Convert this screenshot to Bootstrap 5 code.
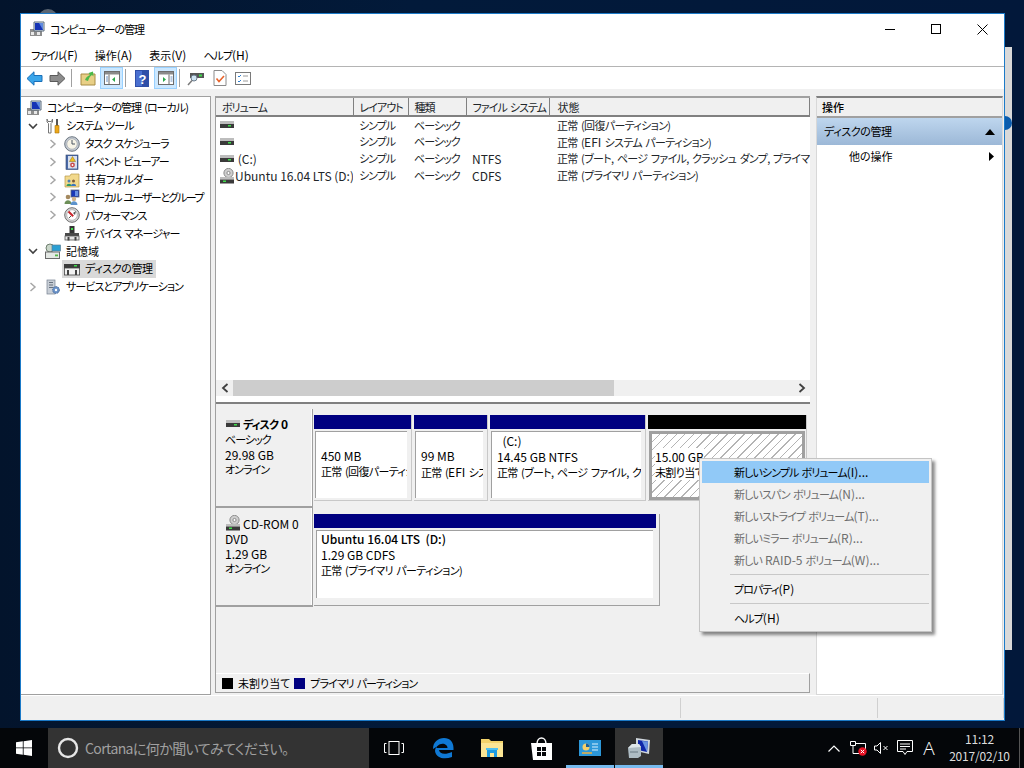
<!DOCTYPE html>
<html lang="ja">
<head>
    <meta charset="UTF-8">
    <title>コンピューターの管理</title>
    <link href="https://cdn.jsdelivr.net/npm/bootstrap@5.3.0/dist/css/bootstrap.min.css" rel="stylesheet">
    <style>
        html, body { height: 768px; overflow: hidden; }
        body {
            background: linear-gradient(90deg, #03142c 0%, #021a3a 40%, #02183a 100%);
            font-family: "Noto Sans CJK JP", "Open Sans", sans-serif;
            font-feature-settings: "palt";
            font-size: 11px;
            letter-spacing: -.95px;
            word-spacing: 1.5px;
            line-height: 15px;
            color: #000;
        }
        /* latin runs stay at full size, the kana are squeezed to the narrow look of the original */
        .ln { font-size: 12px; letter-spacing: 0; word-spacing: 0; }
        .kj { letter-spacing: 0; }
        .mix { letter-spacing: -.65px; }
        .soft { letter-spacing: -.4px; }
        .tight { letter-spacing: -1.5px; }
        svg { display: block; flex: none; }
        .desktop { height: 728px; }
        .back-strip { left: 1005px; top: 47px; width: 7px; height: 603px; background: #d9d9d9; }
        .back-dot { left: 998px; top: 116px; width: 14px; height: 14px; border-radius: 50%; background: #0b5cad; }
        .back-arc { left: 38px; top: 9px; width: 20px; height: 10px; border-radius: 10px 10px 0 0; background: #5a6572; }
        .window {
            left: 20px; top: 13px; width: 985px; height: 708px;
            background: #f0f0f0; border: 1px solid #1b7ac8;
        }
        .titlebar { height: 30px; background: #fff; padding-left: 8px; }
        .titlebar .title { margin-left: 5px; }
        .winbtn { width: 46px; height: 30px; }
        .winbtns { margin-right: -1px; }
        .menubar { height: 23px; background: #fff; border-bottom: 1px solid #b4b4b4; padding-left: 10px; }
        .menubar span.item { margin-right: 17px; }
        .toolbar { height: 22px; background: #fff; padding-left: 2px; }
        .tool { width: 23px; height: 22px; }
        .tool.w25 { width: 25px; }
        .tool.on { background: #cce8ff; outline: 1px solid #99d1ff; outline-offset: -1px; }
        .tool-sep { width: 1px; height: 18px; background: #a0a0a0; margin: 0 3px 0 2px; }
        .toolband { height: 7px; background: #f0f0f0; }
        .panes { height: 599px; }
        .pane-left { width: 190px; background: #fff; border-top: 1px solid #a0a0a0; border-right: 1px solid #a0a0a0; border-bottom: 1px solid #a0a0a0; padding-top: 2px; }
        .tree-row { height: 17.9px; white-space: nowrap; }
        .lvl-0 { padding-left: 5px; }
        .lvl-1 { padding-left: 4px; }
        .lvl-2 { padding-left: 24px; }
        .chev { width: 16px; margin-right: 4px; }
        .lvl-2 .chev { margin-right: 3px; }
        .tree-text { margin-left: 5px; }
        .sel-wrap { background: #d9d9d9; width: 94px; padding-left: 2px; margin-left: -2px; height: 18px; }
        .pane-mid { width: 595px; margin: 0 0 2px 4px; border-left: 1px solid #a0a0a0; border-top: 2px solid #a0a0a0; border-bottom: 1px solid #a0a0a0; background: #f0f0f0; }
        .vol-top { height: 306px; background: #fff; border-bottom: 2px solid #808080; }
        .vol-table { table-layout: fixed; width: 100%; margin: 0; --bs-table-bg: transparent; }
        .vol-table th, .vol-table td { padding: 0 0 0 6px; font-weight: 400; white-space: nowrap; overflow: hidden; height: 17px; border: 0; line-height: 15px; vertical-align: middle; }
        .vol-table th { height: 18px; padding-top: 1px; background: #f0f0f0; border-right: 1px solid #808080; border-bottom: 2px solid #808080; }
        .vol-table td:first-child { padding-left: 3px; }
        .vol-table th:last-child, .vol-table td:last-child { padding-left: 8px; }
        .vol-spacer { height: 196px; }
        .hscroll { height: 16px; background: #f0f0f0; }
        .hscroll .arrow { width: 17px; }
        .thumb { width: 381px; height: 16px; background: #cdcdcd; }
        .disk-area { height: 269px; padding-top: 5px; background: #f0f0f0; }
        .disk-row { height: 99px; }
        .disk-label { width: 97px; padding: 7px 0 0 9px; background: #f0f0f0; border-right: 1px solid #a0a0a0; border-bottom: 2px solid #a0a0a0; box-shadow: inset -1px 0 #fff; }
        .disk-label .name { font-weight: 700; gap: 2px; }
        .disk-parts { padding-left: 1px; padding-top: 6px; gap: 2px; }
        .part { height: 86px; border-right: 1px solid #c8c8c8; border-bottom: 1px solid #c8c8c8; }
        .part-bar { height: 14px; background: #000080; }
        .part-bar.black { background: #000; }
        .part-box { margin: 2px 2px 0 1px; height: 69px; background: #fff; border: 2px solid #f0f0f0; border-width: 0 2px 2px 0; box-shadow: inset 1px 1px #a0a0a0; padding: 2px 0 0 6px; white-space: nowrap; overflow: hidden; letter-spacing: -.65px; }
        .part-box.free {
            margin: 2px 1px 0 1px; border: 3px solid #a0a0a0; box-shadow: none; padding: 0 0 0 3px;
            background: repeating-linear-gradient(135deg, #fff 0, #fff 5px, #b4b4b4 5px, #b4b4b4 6px);
        }
        .part-box.free span { background: #fff; }
        .p1 { width: 98px; } .p2 { width: 74px; } .p3 { width: 156px; } .p4 { width: 159px; }
        .cd-part { width: 346px; height: 92px; border-right: 1px solid #a0a0a0; border-bottom: 1px solid #a0a0a0; }
        .cd-part .part-bar { margin-right: 3px; }
        .cd-part .part-box { height: 70px; margin: 2px 4px 0 2px; padding: 1px 0 0 5px; }
        .legend { height: 19px; border-top: 1px solid #fff; border-right: 1px solid #a0a0a0; padding: 1px 0 0 6px; }
        .swatch { width: 11px; height: 11px; margin-right: 5px; }
        .pane-right { width: 187px; margin-left: 6px; background: #fff; border: 1px solid #d8d8d8; border-top: 2px solid #808080; }
        .act-head { height: 20px; background: #f0f0f0; border-bottom: 2px solid #a0a0a0; padding: 1px 0 0 5px; font-weight: 500; }
        .act-sel { height: 27px; background: linear-gradient(#bed6ee, #9cb8d7); padding: 0 7px; }
        .act-item { height: 23px; padding: 0 8px 0 32px; }
        .statusbar { height: 25px; border-top: 1px solid #fff; }
        .status-cell { border-right: 1px solid #d0d0d0; margin: 2px 0; }
        .s1 { width: 660px; } .s2 { width: 197px; } .s3 { width: 126px; }
        .ctx {
            display: block; left: 699px; top: 458px; width: 233px; padding: 2px; margin: 0;
            background: #f0f0f0; border: 1px solid #c4c4c4; border-radius: 0;
            box-shadow: 3px 3px 3px rgba(0, 0, 0, .45); font-size: 11px; color: #000; letter-spacing: -.9px;
        }
        .ctx .dropdown-item { height: 22px; line-height: 22px; padding: 0 0 0 32px; color: #000; }
        .ctx .dropdown-item.active { background: #91c9f7; color: #000; }
        .ctx .dropdown-item.disabled { color: #6d6d6d; background: transparent; }
        .ctx .dropdown-divider { margin: 3px 0 3px 28px; border-top: 1px solid #c8c8c8; opacity: 1; }
        .taskbar { height: 40px; background: #040609; color: #fff; }
        .start { width: 48px; }
        .search { width: 321px; height: 40px; background: #333; padding-left: 9px; color: #a0a0a0; font-size: 14px; letter-spacing: -.6px; gap: 6px; }
        .slot { width: 48px; height: 40px; margin-left: 1px; position: relative; }
        .slot.run { box-shadow: inset 0 -3px #76b9ed, inset 8px 0 #040609, inset -8px 0 #040609; }
        .slot.cur { background: #333; box-shadow: inset 0 -3px #76b9ed; }
        .tray-slot { height: 40px; }
        .t24 { width: 24px; } .t22 { width: 22px; } .t26 { width: 26px; }
        .clock { width: 79px; font-size: 12px; letter-spacing: -.2px; line-height: 17px; color: #ddd; text-align: center; padding-bottom: 2px; }
        .show-desk { width: 5px; height: 40px; border-left: 1px solid #555; }
        .tray-a { font-family: "Open Sans", sans-serif; font-size: 19px; font-weight: 300; letter-spacing: 0; color: #fff; }
    </style>
</head>
<body class="m-0">
<svg width="0" height="0" class="position-absolute">
    <defs>
        <symbol id="drive" viewBox="0 0 16 16"><rect x="1" y="4" width="14" height="3" fill="#bdbdbd"/><rect x="1" y="7" width="14" height="4" fill="#3a3a3a"/><rect x="9" y="8" width="3" height="1.5" fill="#3fdc4a"/></symbol>
        <symbol id="cddrive" viewBox="0 0 16 16"><circle cx="9.5" cy="5" r="4.6" fill="#cfcfcf" stroke="#8c8c8c"/><circle cx="9.5" cy="5" r="1.6" fill="#fff" stroke="#8c8c8c"/><rect x="1" y="9" width="14" height="2.5" fill="#bdbdbd"/><rect x="1" y="11.5" width="14" height="4" fill="#3a3a3a"/><rect x="4" y="12.5" width="3" height="1.5" fill="#3fdc4a"/></symbol>
        <symbol id="mmc" viewBox="0 0 16 16"><rect x="1" y="8" width="12" height="7" fill="#8d8d8d"/><rect x="2" y="11" width="3" height="3" fill="#e8e8e8"/><rect x="8" y="11" width="3" height="3" fill="#e8e8e8"/><path d="M5 1h10v9H5z" fill="#dce6f2" stroke="#5a6a7a"/><path d="M6 2h8v7H6z" fill="#1533b5"/><path d="M10 2h4v7z" fill="#5f8ae0"/></symbol>
        <symbol id="tools" viewBox="0 0 16 16"><path d="M2 1v3l1.500 1.500V15h2.500V5.500L7.500 4V1L6.500 3.500H3z" fill="#fff" stroke="#777"/><path d="M11 1h2v7h-2z" fill="#555"/><path d="M10 7.500h4V15h-4z" fill="#eda81a" stroke="#a8720c" stroke-width=".6"/></symbol>
        <symbol id="clock" viewBox="0 0 16 16"><circle cx="8" cy="8" r="7.300" fill="#c4cad2" stroke="#6d7782"/><circle cx="8" cy="8" r="5.200" fill="#f7f4e7" stroke="#98a0a8" stroke-width=".6"/><path d="M8 4v4h3" fill="none" stroke="#4b5560" stroke-width="1"/></symbol>
        <symbol id="event" viewBox="0 0 16 16"><rect x="2" y="1" width="12" height="14.500" fill="#4a6aa8" stroke="#33476e" stroke-width=".6"/><rect x="4" y="2" width="9" height="12.500" fill="#d8e0ee"/><path d="M8.500 2.500l3 5h-6z" fill="#f0c020" stroke="#8a6a10" stroke-width=".5"/><circle cx="8.500" cy="11" r="2.400" fill="#c84a4a"/><circle cx="8.500" cy="11" r=".9" fill="#fff"/></symbol>
        <symbol id="share" viewBox="0 0 16 16"><path d="M1 4h5l1-2h8v13H1z" fill="#f2d98c" stroke="#b89a48" stroke-width=".7"/><circle cx="5" cy="9" r="1.500" fill="#4c7fb5"/><path d="M2.500 14c0-3 5-3 5 0z" fill="#2e9a60"/><circle cx="9.500" cy="9" r="1.500" fill="#7a5a3a"/><path d="M7 14c0-3 5-3 5 0z" fill="#3a76c0"/></symbol>
        <symbol id="users" viewBox="0 0 16 16"><rect x="7" y="1" width="8" height="7" fill="#1a38b8" stroke="#606a78" stroke-width=".8"/><rect x="11" y="2" width="3" height="5" fill="#6a92e4"/><circle cx="4" cy="8" r="2.300" fill="#a58a60"/><path d="M.5 15c0-5 7-5 7 0z" fill="#6d8f58"/><circle cx="10" cy="10" r="2.200" fill="#d2b48c"/><path d="M6.500 16c0-5 7-5 7 0z" fill="#5d93cc"/></symbol>
        <symbol id="perf" viewBox="0 0 16 16"><circle cx="8" cy="8" r="7.300" fill="#d9d9d9" stroke="#707070"/><circle cx="8" cy="8" r="5.300" fill="#fff" stroke="#999" stroke-width=".6"/><path d="M4.500 4.500L9.200 9.200" stroke="#c8242a" stroke-width="2"/><path d="M9 6l3-2-1 4z" fill="#555"/><path d="M5 11l2-2" stroke="#555"/></symbol>
        <symbol id="device" viewBox="0 0 16 16"><rect x="5.500" y="1" width="5" height="7" fill="#333"/><rect x="7" y="3" width="2" height="2" fill="#3fdc4a"/><rect x="1" y="8" width="14" height="3" fill="#4a4a4a"/><rect x="1" y="11" width="14" height="4" fill="#e6e6e6" stroke="#555" stroke-width=".8"/><rect x="3.500" y="12" width="2" height="3.500" fill="#444"/><rect x="10.500" y="12" width="2" height="3.500" fill="#444"/></symbol>
        <symbol id="storage" viewBox="0 0 16 16"><circle cx="5" cy="5" r="4" fill="#c9d6c9" stroke="#708070"/><rect x="7" y="2" width="8.500" height="6" fill="#2b9fd3" stroke="#5a7f95" stroke-width=".7"/><rect x=".5" y="9" width="14" height="6.500" fill="#e4e8e4" stroke="#6a6a6a"/><rect x="10" y="11.500" width="3" height="1.800" fill="#54b848"/></symbol>
        <symbol id="diskm" viewBox="0 0 16 16"><rect x="0" y="3" width="16" height="4" fill="#3c3c3c"/><rect x="10" y="4" width="3" height="1.500" fill="#3fdc4a"/><rect x=".4" y="7" width="15.200" height="7" fill="#f2f2f2" stroke="#444" stroke-width=".8"/><rect x="3" y="9" width="2" height="5" fill="#444"/><rect x="11" y="9" width="2" height="5" fill="#444"/></symbol>
        <symbol id="services" viewBox="0 0 16 16"><rect x="2" y="1" width="8" height="14" fill="#c8ced6" stroke="#768090" stroke-width=".7"/><path d="M4 3.500h4M4 6h4M4 8.500h4" stroke="#68727e"/><circle cx="11" cy="11" r="3.400" fill="#6a92c8" stroke="#4a6a98" stroke-dasharray="1.500 1"/><circle cx="11" cy="11" r="1.200" fill="#fff"/></symbol>
        <symbol id="chev-r" viewBox="0 0 10 10"><path d="M2.500 1l4.500 4-4.500 4" fill="none" stroke="#a6a6a6" stroke-width="1.500"/></symbol>
        <symbol id="chev-d" viewBox="0 0 10 10"><path d="M1 3l4 4 4-4" fill="none" stroke="#404040" stroke-width="1.600"/></symbol>
    </defs>
</svg>

<div class="desktop position-relative">
    <div class="back-arc position-absolute"></div>
    <div class="back-strip position-absolute"></div>
    <div class="back-dot position-absolute"></div>

    <div class="window position-absolute d-flex flex-column">
        <div class="titlebar d-flex align-items-center">
            <svg width="16" height="16"><use href="#mmc"/></svg>
            <span class="title">コンピューターの管理</span>
            <div class="winbtns ms-auto d-flex">
                <div class="winbtn d-flex align-items-center justify-content-center"><svg width="10" height="10" viewBox="0 0 10 10"><path d="M0 5.500h10" stroke="#000"/></svg></div>
                <div class="winbtn d-flex align-items-center justify-content-center"><svg width="10" height="10" viewBox="0 0 10 10"><rect x=".5" y=".5" width="9" height="9" fill="none" stroke="#000"/></svg></div>
                <div class="winbtn d-flex align-items-center justify-content-center"><svg width="11" height="11" viewBox="0 0 11 11"><path d="M.5.500l10 10M10.500.500l-10 10" stroke="#000"/></svg></div>
            </div>
        </div>
        <div class="menubar d-flex align-items-center">
            <span class="item tight">ファイル<span class="ln">(F)</span></span><span class="item kj">操作<span class="ln">(A)</span></span><span class="item kj">表示<span class="ln">(V)</span></span><span class="item">ヘルプ<span class="ln">(H)</span></span>
        </div>
        <div class="toolbar d-flex align-items-center">
            <div class="tool d-flex align-items-center justify-content-center"><svg width="17" height="15" viewBox="0 0 17 15"><path d="M1 7.500L8 .8V4.500h8v6H8v3.700z" fill="#3aa5ea" stroke="#1a6fb8"/></svg></div>
            <div class="tool d-flex align-items-center justify-content-center"><svg width="17" height="15" viewBox="0 0 17 15"><path d="M16 7.500L9 .8V4.500H1v6h8v3.700z" fill="#8c8c8c" stroke="#5a5a5a"/></svg></div>
            <div class="tool-sep"></div>
            <div class="tool w25 d-flex align-items-center justify-content-center"><svg width="16" height="16" viewBox="0 0 16 16"><path d="M1 4h14v11H1z" fill="#e8cf86" stroke="#a88c44"/><path d="M5 10c1-3 3-4 5-5L8.500 3 13 1.500l.5 5L12 5c-2 1-3 3-4 6z" fill="#4cb848"/></svg></div>
            <div class="tool on d-flex align-items-center justify-content-center"><svg width="16" height="14" viewBox="0 0 16 14"><rect x=".5" y=".5" width="15" height="13" fill="#fff" stroke="#6d6d6d"/><path d="M1 1h14v2.500H1z" fill="#8a8a8a"/><path d="M5 3.500v10" stroke="#6d6d6d"/><path d="M2 6h2M2 8h2M2 10h2" stroke="#6a90c0"/><path d="M11 6v5L8 8.500z" fill="#2aa84a"/></svg></div>
            <div class="tool-sep"></div>
            <div class="tool w25 d-flex align-items-center justify-content-center"><svg width="14" height="17" viewBox="0 0 14 17"><rect width="14" height="17" fill="#2f4fa8"/><path d="M1 1h6v15H1z" fill="#4a6fd0"/><text x="7" y="13.500" text-anchor="middle" fill="#fff" font-size="13" font-weight="700" font-family="Liberation Sans">?</text></svg></div>
            <div class="tool on d-flex align-items-center justify-content-center"><svg width="16" height="14" viewBox="0 0 16 14"><rect x=".5" y=".5" width="15" height="13" fill="#fff" stroke="#6d6d6d"/><path d="M1 1h14v2.500H1z" fill="#8a8a8a"/><path d="M11 3.500v10" stroke="#6d6d6d"/><path d="M12.500 6h2M12.500 8h2M12.500 10h2" stroke="#6a90c0"/><path d="M5 6v5l3-2.500z" fill="#2aa84a"/></svg></div>
            <div class="tool-sep"></div>
            <div class="tool w25 d-flex align-items-center justify-content-center"><svg width="18" height="16" viewBox="0 0 18 16"><rect x="3" y="3" width="14" height="5" fill="#555"/><rect x="12" y="4.500" width="3" height="2" fill="#3fdc4a"/><circle cx="7" cy="8" r="3" fill="#cfe3f2" stroke="#6a7a8a"/><path d="M5 10.500L1 15" stroke="#7a7a7a" stroke-width="1.500"/></svg></div>
            <div class="tool d-flex align-items-center justify-content-center"><svg width="14" height="16" viewBox="0 0 14 16"><path d="M1 .5h8l4 4v11H1z" fill="#fff" stroke="#8a8a8a"/><path d="M3.500 8.500l2.500 3 5-5.500" fill="none" stroke="#e8632a" stroke-width="1.600"/></svg></div>
            <div class="tool d-flex align-items-center justify-content-center"><svg width="16" height="13" viewBox="0 0 16 13"><rect x=".5" y=".5" width="15" height="12" fill="#fff" stroke="#7a7a7a"/><path d="M3 4l1 1 2-2M3 9l1 1 2-2" fill="none" stroke="#2f7fd0"/><path d="M8 4h5M8 9h5" stroke="#9a9a9a"/></svg></div>
        </div>
        <div class="toolband"></div>

        <div class="panes d-flex">
            <div class="pane-left">
                <div class="tree-row lvl-0 d-flex align-items-center"><svg width="16" height="16"><use href="#mmc"/></svg><span class="tree-text">コンピューターの管理 (ローカル)</span></div>
                <div class="tree-row lvl-1 d-flex align-items-center"><svg class="chev" width="10" height="10"><use href="#chev-d"/></svg><svg width="16" height="16"><use href="#tools"/></svg><span class="tree-text">システム ツール</span></div>
                <div class="tree-row lvl-2 d-flex align-items-center"><svg class="chev" width="10" height="10"><use href="#chev-r"/></svg><svg width="16" height="16"><use href="#clock"/></svg><span class="tree-text">タスク スケジューラ</span></div>
                <div class="tree-row lvl-2 d-flex align-items-center"><svg class="chev" width="10" height="10"><use href="#chev-r"/></svg><svg width="16" height="16"><use href="#event"/></svg><span class="tree-text">イベント ビューアー</span></div>
                <div class="tree-row lvl-2 d-flex align-items-center"><svg class="chev" width="10" height="10"><use href="#chev-r"/></svg><svg width="16" height="16"><use href="#share"/></svg><span class="tree-text soft">共有フォルダー</span></div>
                <div class="tree-row lvl-2 d-flex align-items-center"><svg class="chev" width="10" height="10"><use href="#chev-r"/></svg><svg width="16" height="16"><use href="#users"/></svg><span class="tree-text tight">ローカル ユーザーとグループ</span></div>
                <div class="tree-row lvl-2 d-flex align-items-center"><svg class="chev" width="10" height="10"><use href="#chev-r"/></svg><svg width="16" height="16"><use href="#perf"/></svg><span class="tree-text">パフォーマンス</span></div>
                <div class="tree-row lvl-2 d-flex align-items-center"><div class="chev"></div><svg width="16" height="16"><use href="#device"/></svg><span class="tree-text">デバイス マネージャー</span></div>
                <div class="tree-row lvl-1 d-flex align-items-center"><svg class="chev" width="10" height="10"><use href="#chev-d"/></svg><svg width="16" height="16"><use href="#storage"/></svg><span class="tree-text kj">記憶域</span></div>
                <div class="tree-row lvl-2 d-flex align-items-center"><div class="chev"></div><div class="sel-wrap d-flex align-items-center"><svg width="16" height="16"><use href="#diskm"/></svg><span class="tree-text soft">ディスクの管理</span></div></div>
                <div class="tree-row lvl-1 d-flex align-items-center"><svg class="chev" width="10" height="10"><use href="#chev-r"/></svg><svg width="16" height="16"><use href="#services"/></svg><span class="tree-text">サービスとアプリケーション</span></div>
            </div>

            <div class="pane-mid">
                <div class="vol-top">
                    <table class="table vol-table">
                        <colgroup><col width="137"><col width="55"><col width="58"><col width="83"><col></colgroup>
                        <thead><tr><th>ボリューム</th><th>レイアウト</th><th>種類</th><th>ファイル システム</th><th class="kj">状態</th></tr></thead>
                        <tbody>
                            <tr><td><svg width="16" height="16"><use href="#drive"/></svg></td><td>シンプル</td><td>ベーシック</td><td></td><td class="mix">正常 (回復パーティション)</td></tr>
                            <tr><td><svg width="16" height="16"><use href="#drive"/></svg></td><td>シンプル</td><td>ベーシック</td><td></td><td class="mix">正常 (<span class="ln">EFI</span> システム パーティション)</td></tr>
                            <tr><td><div class="d-flex align-items-center"><svg width="16" height="16"><use href="#drive"/></svg><span class="ln">&nbsp;(C:)</span></div></td><td>シンプル</td><td>ベーシック</td><td class="ln">NTFS</td><td class="mix">正常 (ブート, ページ ファイル, クラッシュ ダンプ, プライマリ パーティション)</td></tr>
                            <tr><td><div class="d-flex align-items-center"><svg width="16" height="16"><use href="#cddrive"/></svg><span class="ln">Ubuntu 16.04 LTS (D:)</span></div></td><td>シンプル</td><td>ベーシック</td><td class="ln">CDFS</td><td class="mix">正常 (プライマリ パーティション)</td></tr>
                        </tbody>
                    </table>
                    <div class="vol-spacer"></div>
                    <div class="hscroll d-flex align-items-center">
                        <div class="arrow d-flex justify-content-center"><svg width="8" height="10" viewBox="0 0 8 10"><path d="M6.500 1L2 5l4.500 4" fill="none" stroke="#404040" stroke-width="1.800"/></svg></div>
                        <div class="thumb"></div>
                        <div class="arrow ms-auto d-flex justify-content-center"><svg width="8" height="10" viewBox="0 0 8 10"><path d="M1.500 1L6 5 1.500 9" fill="none" stroke="#404040" stroke-width="1.800"/></svg></div>
                    </div>
                </div>
                <div class="disk-area">
                    <div class="disk-row d-flex">
                        <div class="disk-label">
                            <div class="name d-flex align-items-center"><svg width="16" height="16"><use href="#drive"/></svg><span>ディスク <span class="ln">0</span></span></div>
                            <div>ベーシック</div><div class="ln">29.98 GB</div><div>オンライン</div>
                        </div>
                        <div class="disk-parts d-flex">
                            <div class="part p1"><div class="part-bar"></div><div class="part-box"><br><span class="ln">450 MB</span><br>正常 (回復パーティション)</div></div>
                            <div class="part p2"><div class="part-bar"></div><div class="part-box"><br><span class="ln">99 MB</span><br>正常 (<span class="ln">EFI</span> システム パーティション)</div></div>
                            <div class="part p3"><div class="part-bar"></div><div class="part-box"><span class="ln">&nbsp;&nbsp;(C:)</span><br><span class="ln">14.45 GB NTFS</span><br>正常 (ブート, ページ ファイル, クラッシュ ダンプ, プライマリ パーティション)</div></div>
                            <div class="part p4"><div class="part-bar black"></div><div class="part-box free"><br><span class="ln">15.00 GB</span><br><span>未割り当て</span></div></div>
                        </div>
                    </div>
                    <div class="disk-row d-flex">
                        <div class="disk-label">
                            <div class="name d-flex align-items-center"><svg width="16" height="16"><use href="#cddrive"/></svg><span class="fw-normal ln">CD-ROM 0</span></div>
                            <div class="ln">DVD</div><div class="ln">1.29 GB</div><div>オンライン</div>
                        </div>
                        <div class="disk-parts d-flex">
                            <div class="cd-part"><div class="part-bar"></div><div class="part-box"><span class="fw-medium ln">Ubuntu 16.04 LTS&nbsp; (D:)</span><br><span class="ln">1.29 GB CDFS</span><br>正常 (プライマリ パーティション)</div></div>
                        </div>
                    </div>
                </div>
                <div class="legend d-flex align-items-center">
                    <span class="swatch bg-black"></span><span class="kj me-1">未割り当て</span>
                    <span class="swatch part-bar"></span><span>プライマリ パーティション</span>
                </div>
            </div>

            <div class="pane-right">
                <div class="act-head d-flex align-items-center kj">操作</div>
                <div class="act-sel d-flex align-items-center justify-content-between"><span class="soft">ディスクの管理</span><svg width="10" height="6" viewBox="0 0 10 6"><path d="M0 6l5-6 5 6z" fill="#000"/></svg></div>
                <div class="act-item d-flex align-items-center justify-content-between"><span class="kj">他の操作</span><svg width="5" height="9" viewBox="0 0 5 9"><path d="M0 0l5 4.500L0 9z" fill="#000"/></svg></div>
            </div>
        </div>

        <div class="statusbar d-flex">
            <div class="status-cell s1"></div><div class="status-cell s2"></div><div class="status-cell s3"></div>
        </div>
    </div>

    <ul class="dropdown-menu ctx position-absolute list-unstyled">
        <li><a class="dropdown-item active" href="#">新しいシンプル ボリューム<span class="ln">(I)...</span></a></li>
        <li><a class="dropdown-item disabled" href="#">新しいスパン ボリューム<span class="ln">(N)...</span></a></li>
        <li><a class="dropdown-item disabled" href="#">新しいストライプ ボリューム<span class="ln">(T)...</span></a></li>
        <li><a class="dropdown-item disabled" href="#">新しいミラー ボリューム<span class="ln">(R)...</span></a></li>
        <li><a class="dropdown-item disabled" href="#">新しい <span class="ln">RAID-5</span> ボリューム<span class="ln">(W)...</span></a></li>
        <li><hr class="dropdown-divider"></li>
        <li><a class="dropdown-item" href="#">プロパティ<span class="ln">(P)</span></a></li>
        <li><hr class="dropdown-divider"></li>
        <li><a class="dropdown-item" href="#">ヘルプ<span class="ln">(H)</span></a></li>
    </ul>
</div>

<div class="taskbar d-flex align-items-center">
    <div class="start d-flex align-items-center justify-content-center"><svg width="16" height="16" viewBox="0 0 16 16"><path d="M0 2.300l6.800-1V7.500H0zM7.600 1.200L16 0v7.500H7.600zM0 8.300h6.800v6.400L0 13.700zM7.600 8.300H16V16l-8.400-1.200z" fill="#fff"/></svg></div>
    <div class="search d-flex align-items-center"><svg width="22" height="22" viewBox="0 0 22 22"><circle cx="11" cy="11" r="9" fill="none" stroke="#e6e6e6" stroke-width="2.400"/></svg><span>Cortanaに何か聞いてみてください。</span></div>
    <div class="slot d-flex align-items-center justify-content-center"><svg width="20" height="14" viewBox="0 0 20 14"><rect x="5" y=".5" width="10" height="13" fill="none" stroke="#fff"/><path d="M2.500 2.500H.5v9h2M17.500 2.500h2v9h-2" fill="none" stroke="#fff"/></svg></div>
    <div class="slot d-flex align-items-center justify-content-center"><svg width="22" height="22" viewBox="0 0 22 22"><path d="M1 12C1 5 6 1 12 1c6 0 9.500 4 9.500 10v2H7c.5 4 6 5 13 2v5c-8 3-16 1-17-6 0-2 1-4 3-6-.8 1-1.500 2-1.500 3h11c0-4-6-6-10-2-1.500 1.200-2.600 2-4.500 3z" fill="#0f78d4"/></svg></div>
    <div class="slot d-flex align-items-center justify-content-center"><svg width="22" height="18" viewBox="0 0 22 18"><path d="M0 0h8l2 2h12v16H0z" fill="#f3d36b"/><path d="M0 4h22v14H0z" fill="#fbe594"/><path d="M6 10h10v8h-3v-4H9v4H6z" fill="#1e9be0"/><path d="M5 9h12v2H5z" fill="#4fc0ef"/></svg></div>
    <div class="slot d-flex align-items-center justify-content-center"><svg width="21" height="23" viewBox="0 0 21 23"><path d="M6 7c0-8 9-8 9 0" fill="none" stroke="#fff" stroke-width="1.500"/><path d="M0 6h21v17H2z" fill="#fff"/><path d="M6 10h4v4H6zM11 10h4v4h-4zM6 15h4v4H6zM11 15h4v4h-4z" fill="#040609"/></svg></div>
    <div class="slot run d-flex align-items-center justify-content-center"><svg width="22" height="16" viewBox="0 0 22 16"><rect width="22" height="16" fill="#2c97d9"/><circle cx="7" cy="7" r="3.500" fill="#f3cf6a"/><path d="M7 7V3.500A3.500 3.500 0 0 1 10.500 7z" fill="#1a5e9a"/><path d="M13 4h6M13 7h6M13 10h6" stroke="#d8f0ff"/><path d="M3 13h10" stroke="#f0b040" stroke-width="1.500"/></svg></div>
    <div class="slot cur d-flex align-items-center justify-content-center"><svg width="24" height="22" viewBox="0 0 24 22"><path d="M9 1l14 2-1 14-13-3z" fill="#cfd6dc"/><path d="M11 3l10 1.500-1 10.500-9-2z" fill="#0f27a8"/><path d="M15 4l6 .5-1 10.500z" fill="#6a94e0"/><path d="M1 11l4-4h7l2 3v9l-3 2H2z" fill="#aebcc4"/><path d="M1 11l4-4h7l2 3z" fill="#dfe6ea"/><path d="M3 15h8" stroke="#7f8f98" stroke-width="1.500"/></svg></div>

    <div class="ms-auto d-flex align-items-center">
        <div class="tray-slot t24 d-flex align-items-center justify-content-center"><svg width="12" height="7" viewBox="0 0 12 7"><path d="M.5 6.500L6 1l5.500 5.500" fill="none" stroke="#fff" stroke-width="1.200"/></svg></div>
        <div class="tray-slot t24 d-flex align-items-center justify-content-center"><svg width="17" height="15" viewBox="0 0 17 15"><path d="M.5.500h5v4h-5zM5.500 2.500h10v7M3 4.500v8h6" fill="none" stroke="#fff"/><circle cx="12.500" cy="10.500" r="4.200" fill="#e81123"/><path d="M10.800 8.800l3.400 3.400M14.200 8.800l-3.400 3.400" stroke="#fff"/></svg></div>
        <div class="tray-slot t22 d-flex align-items-center justify-content-center"><svg width="15" height="12" viewBox="0 0 15 12"><path d="M.5 4v4h2.500L6.500 11.500V.500L3 4z" fill="none" stroke="#fff"/><path d="M9.500 4l4 4M13.500 4l-4 4" stroke="#fff"/></svg></div>
        <div class="tray-slot t26 d-flex align-items-center justify-content-center"><svg width="16" height="16" viewBox="0 0 16 16"><path d="M.5.500h15v11H10l-2 3-2-3H.5z" fill="none" stroke="#fff"/><path d="M3 4h10M3 6.500h10M3 9h6" stroke="#fff"/></svg></div>
        <div class="tray-slot t22 tray-a d-flex align-items-center justify-content-center">A</div>
        <div class="clock"><div>11:12</div><div>2017/02/10</div></div>
        <div class="show-desk"></div>
    </div>
</div>
</body>
</html>
